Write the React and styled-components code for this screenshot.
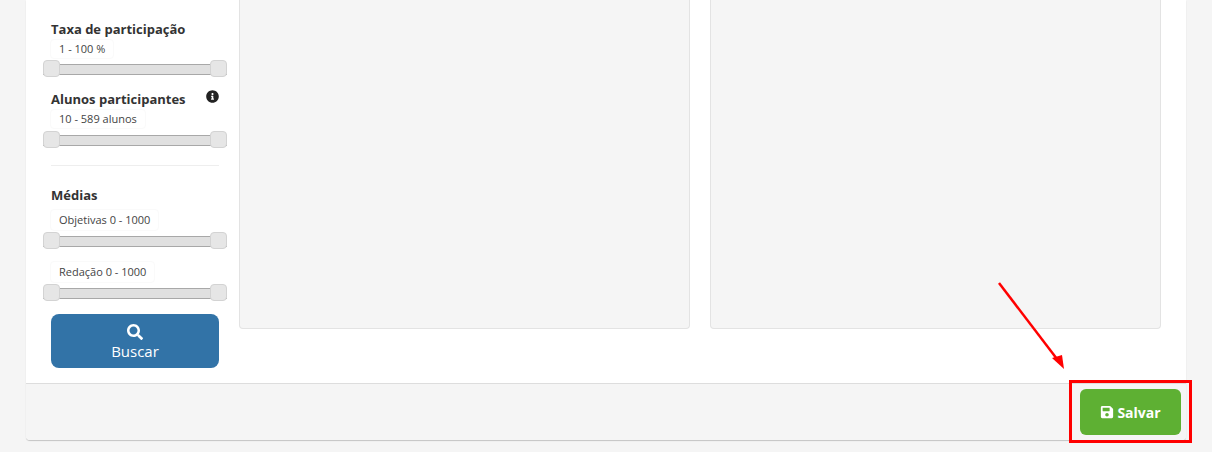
import React from "react";
import styled, { createGlobalStyle } from "styled-components";
import { FaSearch, FaSave, FaInfoCircle } from "react-icons/fa";

const GlobalStyle = createGlobalStyle`
  html, body {
    margin: 0;
    padding: 0;
    background-color: #f5f5f5;
    font-family: "Open Sans", "Liberation Sans", sans-serif;
    color: #333333;
  }
  * {
    box-sizing: border-box;
  }
`;

const Page = styled.div`
  position: relative;
  width: 1212px;
  height: 452px;
  overflow: hidden;
  padding-left: 26px;
`;

const Card = styled.div`
  width: 1160px;
  height: 440px;
  background-color: #ffffff;
  border-radius: 0 0 4px 4px;
  box-shadow: 0 1px 1px rgba(0, 0, 0, 0.2);
  display: flex;
  flex-direction: column;
`;

const Body = styled.div`
  height: 383px;
  flex-shrink: 0;
  padding-left: 25px;
  display: flex;
`;

const Sidebar = styled.aside`
  width: 168px;
  margin-right: 20px;
  padding-top: 20px;
`;

const FilterTitle = styled.div`
  position: relative;
  font-size: 13px;
  font-weight: 700;
  line-height: 18px;
  margin-bottom: ${(p) => p.$gap || 1}px;
  color: #333333;
`;

const InfoIcon = styled(FaInfoCircle)`
  position: absolute;
  right: 0;
  top: 0;
  width: 13px;
  height: 13px;
  color: #222222;
`;

const Pill = styled.div`
  display: table;
  height: ${(p) => p.$height}px;
  margin-left: -1px;
  padding: 0 8px;
  font-size: 11px;
  line-height: ${(p) => p.$height - 2}px;
  color: #444444;
  background-color: #ffffff;
  border: 1px solid #fafafa;
  border-radius: 4px;
`;

const SliderWrap = styled.div`
  position: relative;
  width: 184px;
  height: 17px;
  margin: ${(p) => p.$top}px 0 ${(p) => p.$bottom}px -8px;
  padding: 4px 0;
`;

const SliderTrack = styled.div`
  height: 11px;
  background-color: #e0e0e0;
  border-top: 1px solid #a8a8a8;
  border-bottom: 1px solid #a8a8a8;
`;

const SliderHandle = styled.div`
  position: absolute;
  top: 0;
  ${(p) => (p.$right ? "right: 0;" : "left: 0;")}
  width: 17px;
  height: 17px;
  background-color: #e6e6e6;
  border: 1px solid #d3d3d3;
  border-radius: 4px;
`;

const Divider = styled.hr`
  height: 1px;
  margin: 0 0 20px;
  border: 0;
  background-color: #eeeeee;
`;

const SearchButton = styled.button`
  width: 168px;
  height: 54px;
  padding: 10px 0 0;
  border: 0;
  border-radius: 8px;
  background-color: #3273a7;
  color: #ffffff;
  font-family: inherit;
  font-size: 15px;
  line-height: 20px;
  display: flex;
  flex-direction: column;
  align-items: center;
  gap: 1px;

  svg {
    width: 16px;
    height: 16px;
    flex-shrink: 0;
  }
`;

const Panels = styled.div`
  display: flex;
  gap: 20px;
`;

const Panel = styled.div`
  width: 451px;
  height: 329px;
  background-color: #f5f5f5;
  border: 1px solid #e3e3e3;
  border-top: 0;
  border-radius: 0 0 4px 4px;
`;

const Footer = styled.div`
  flex: 1;
  background-color: #f5f5f5;
  border-top: 1px solid #dddddd;
  border-radius: 0 0 4px 4px;
  display: flex;
  justify-content: flex-end;
  padding: 5px 5px 0 0;
`;

const SaveButton = styled.button`
  width: 101px;
  height: 46px;
  border: 0;
  border-radius: 6px;
  background-color: #5eb033;
  color: #ffffff;
  font-family: inherit;
  font-size: 14px;
  font-weight: 700;
  display: flex;
  align-items: center;
  justify-content: center;
  gap: 3px;

  svg {
    width: 14px;
    height: 14px;
  }
`;

const Highlight = styled.div`
  position: absolute;
  left: 1069px;
  top: 380px;
  width: 123px;
  height: 63px;
  border: 3px solid #ff0000;
`;

const Arrow = styled.svg`
  position: absolute;
  left: 990px;
  top: 275px;
`;

const RangeSlider = ({ top = 1, bottom = 0 }) => (
  <SliderWrap $top={top} $bottom={bottom}>
    <SliderTrack />
    <SliderHandle />
    <SliderHandle $right />
  </SliderWrap>
);

export default function App() {
  return (
    <>
      <GlobalStyle />
      <Page>
        <Card>
          <Body>
            <Sidebar>
              <FilterTitle>Taxa de participação</FilterTitle>
              <Pill $height={20}>1 - 100 %</Pill>
              <RangeSlider bottom={13} />

              <FilterTitle>
                Alunos participantes
                <InfoIcon />
              </FilterTitle>
              <Pill $height={20}>10 - 589 alunos</Pill>
              <RangeSlider top={2} bottom={17} />

              <Divider />

              <FilterTitle $gap={5}>Médias</FilterTitle>
              <Pill $height={22}>Objetivas 0 - 1000</Pill>
              <RangeSlider top={1} bottom={12} />
              <Pill $height={22}>Redação 0 - 1000</Pill>
              <RangeSlider top={1} bottom={13} />

              <SearchButton>
                <FaSearch />
                Buscar
              </SearchButton>
            </Sidebar>
            <Panels>
              <Panel />
              <Panel />
            </Panels>
          </Body>
          <Footer>
            <SaveButton>
              <FaSave />
              Salvar
            </SaveButton>
          </Footer>
        </Card>
        <Arrow width="85" height="105" viewBox="0 0 85 105">
          <line x1="9" y1="8" x2="67" y2="84" stroke="#ff0000" strokeWidth="2.5" />
          <polygon points="74,94 62,83 72,80" fill="#ff0000" />
        </Arrow>
        <Highlight />
      </Page>
    </>
  );
}
